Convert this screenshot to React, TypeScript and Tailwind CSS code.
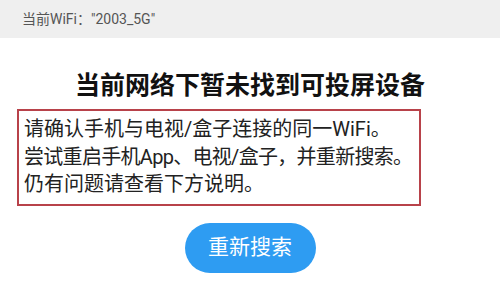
export default function App() {
  return (
    <div className="w-[500px] h-[293px] bg-white overflow-hidden font-['Roboto','Noto_Sans_CJK_SC',sans-serif]">
      <div className="h-[38px] bg-[#efefef] flex items-center pl-[22px] text-[14px] text-[#555]">
        当前WiFi："2003_5G"
      </div>

      <h1 className="mt-[31px] text-center text-[25px] leading-[34px] font-bold text-[#111]">
        当前网络下暂未找到可投屏设备
      </h1>

      <div className="mt-[6px] ml-[17px] w-[404px] border-2 border-[#b8424a] px-[5px] py-[5px] text-[20px] leading-[27.5px] text-[#222] whitespace-nowrap">
        <p>请确认手机与电视/盒子连接的同一WiFi。</p>
        <p className="tracking-[-0.7px]">尝试重启手机App、电视/盒子，并重新搜索。</p>
        <p>仍有问题请查看下方说明。</p>
      </div>

      <div className="mt-[17px] flex justify-center">
        <button className="w-[131px] h-[50px] rounded-full bg-[#2e9cf2] text-white text-[21px]">
          重新搜索
        </button>
      </div>
    </div>
  )
}
